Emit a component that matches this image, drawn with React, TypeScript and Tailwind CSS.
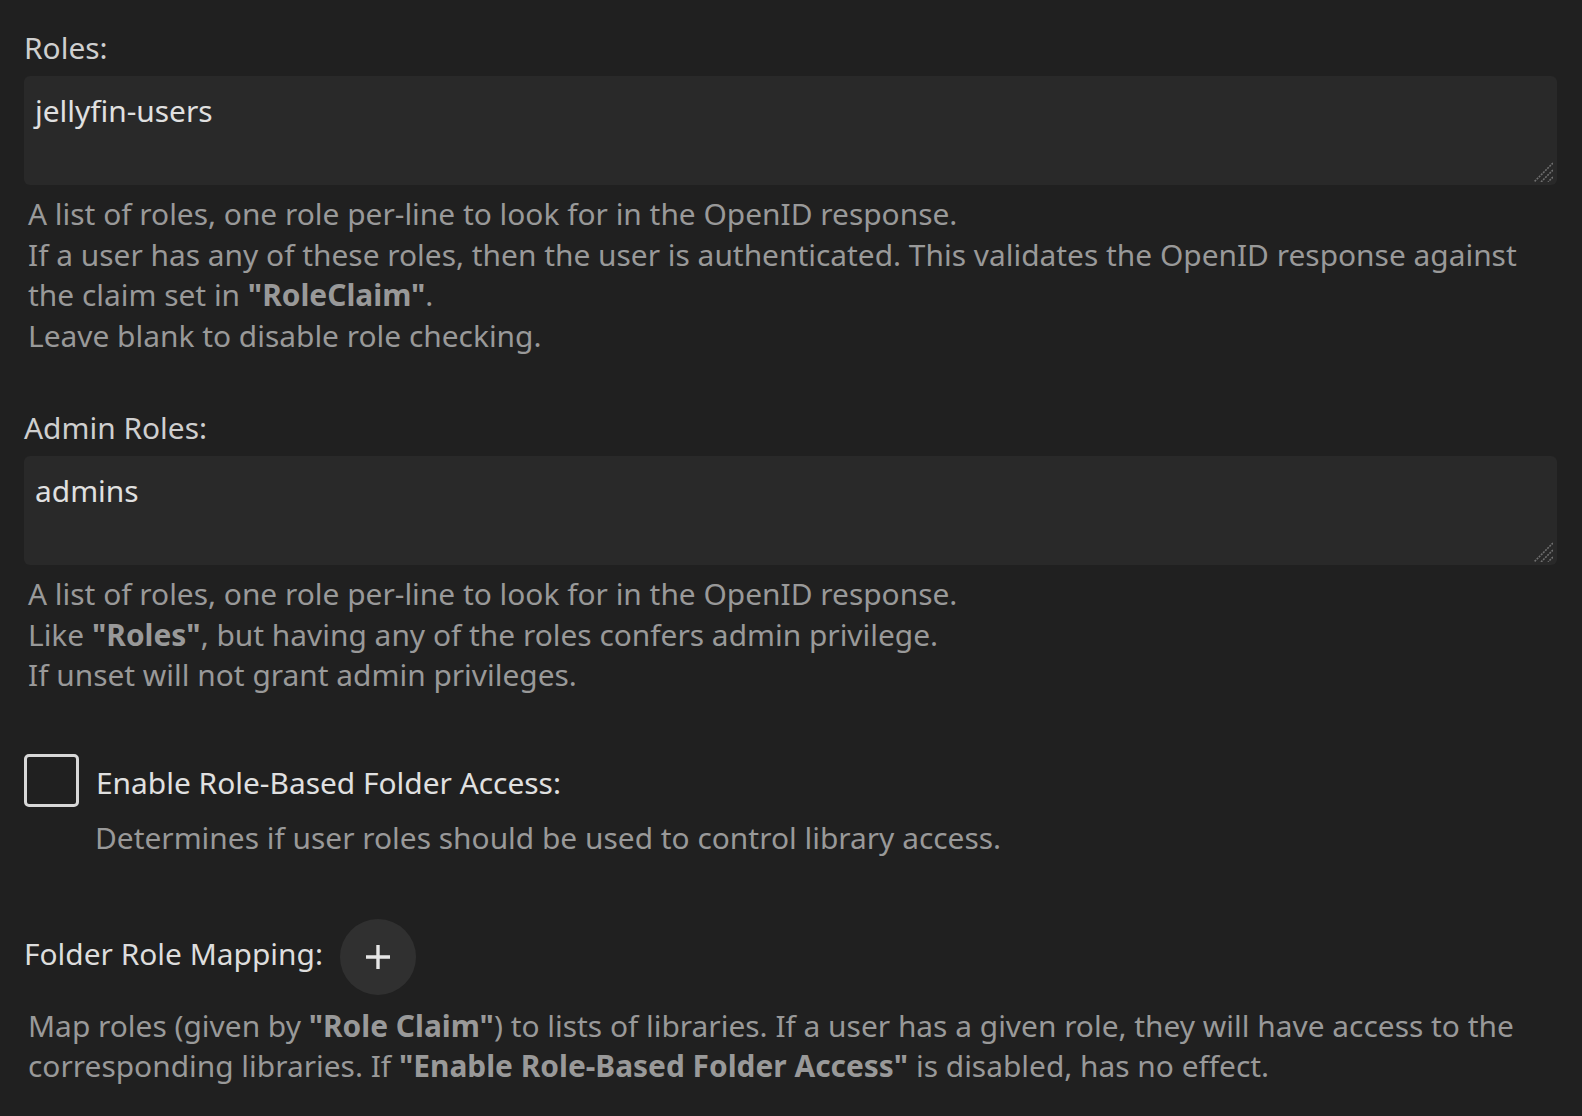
import React from "react"

function Description({ children }: { children: React.ReactNode }) {
  return <div className="pl-[4px] text-[29.9px] leading-[40.4px] text-[#999999]">{children}</div>
}

function ResizeGrip() {
  return (
    <svg width="20" height="20" viewBox="0 0 20 20" className="pointer-events-none absolute bottom-[3px] right-[4px]">
      <g stroke="#6f6f6f" strokeWidth="1.6" strokeDasharray="2 1">
        <path d="M20 1L1 20" />
        <path d="M20 8L8 20" />
        <path d="M20 15L15 20" />
      </g>
    </svg>
  )
}

function RoleField({ label, value, children }: { label: string; value: string; children: React.ReactNode }) {
  return (
    <div>
      <label className="block text-[29.9px] leading-[40.4px] text-[#cfcfcf]">{label}</label>
      <div className="relative mt-[8px]">
        <textarea
          readOnly
          defaultValue={value}
          className="block h-[109px] w-full resize-none rounded-[6px] bg-[#292929] px-[11px] py-[15px] text-[29.9px] leading-[40.4px] text-[#e0e0e0] outline-none"
        />
        <ResizeGrip />
      </div>
      <div className="mt-[9px]">
        <Description>{children}</Description>
      </div>
    </div>
  )
}

export default function App() {
  return (
    <div
      className="min-h-screen bg-[#202020] pl-[24px] pr-[25px] pt-[28px] pb-[30px]"
      style={{ fontFamily: '"Noto Sans", "Open Sans", sans-serif' }}
    >
      <RoleField label="Roles:" value="jellyfin-users">
        A list of roles, one role per-line to look for in the OpenID response.
        <br />
        If a user has any of these roles, then the user is authenticated. This validates the OpenID response against
        the claim set in <b>"RoleClaim"</b>.
        <br />
        Leave blank to disable role checking.
      </RoleField>

      <div className="mt-[52px]">
        <RoleField label="Admin Roles:" value="admins">
          A list of roles, one role per-line to look for in the OpenID response.
          <br />
          Like <b>"Roles"</b>, but having any of the roles confers admin privilege.
          <br />
          If unset will not grant admin privileges.
        </RoleField>
      </div>

      {/* role-based folder access */}
      <div className="mt-[58px]">
        <label className="flex items-center gap-[17px]">
          <span className="block h-[53px] w-[55px] shrink-0 rounded-[5px] border-[3px] border-[#d8d8d8]" />
          <span className="pt-[7px] text-[29.9px] leading-[40.4px] text-[#e0e0e0]">Enable Role-Based Folder Access:</span>
        </label>
        <div className="mt-[11px] pl-[67px]">
          <Description>Determines if user roles should be used to control library access.</Description>
        </div>
      </div>

      <div className="mt-[61px]">
        <div className="flex items-center gap-[17px]">
          <span className="-mt-[6px] text-[29.9px] leading-[40.4px] text-[#dddddd]">Folder Role Mapping:</span>
          <button className="flex h-[76px] w-[76px] items-center justify-center rounded-full bg-[#303030]">
            <svg width="24" height="24" viewBox="0 0 24 24" className="text-[#e6e6e6]">
              <path d="M12 0v24M0 12h24" stroke="currentColor" strokeWidth="3.4" fill="none" />
            </svg>
          </button>
        </div>
        <div className="mt-[11px]">
          <Description>
            Map roles (given by <b>"Role Claim"</b>) to lists of libraries. If a user has a given role, they will have
            access to the corresponding libraries. If <b>"Enable Role-Based Folder Access"</b> is disabled, has no effect.
          </Description>
        </div>
      </div>
    </div>
  )
}
